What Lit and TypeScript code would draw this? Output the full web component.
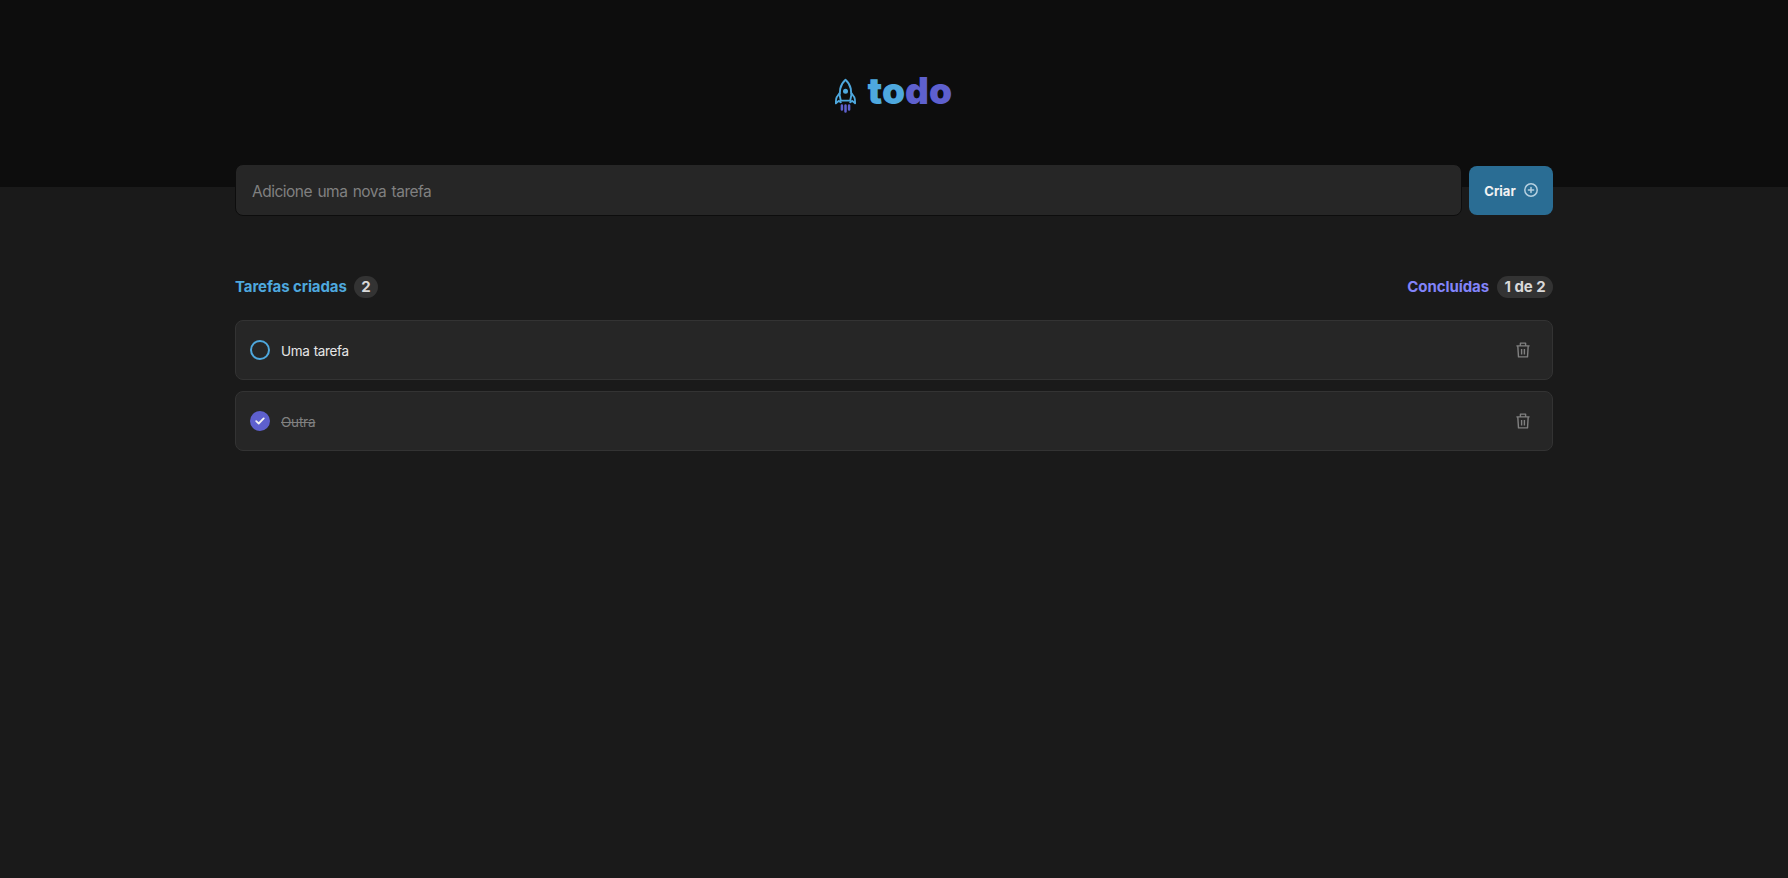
import { LitElement, html, css, svg } from "lit";
import { customElement, state } from "lit/decorators.js";

interface Task {
  title: string;
  done: boolean;
}

const rocket = svg`<svg class="rocket" width="22" height="36" viewBox="0.5 0 22 36" fill="none">
  <g stroke="#4EA8DE" stroke-width="1.9" stroke-linejoin="round" stroke-linecap="round">
    <path d="M6.3 22.6C3.7 14.5 5.8 6.2 11 1.8C16.2 6.2 18.3 14.5 15.7 22.6Z"/>
    <path d="M5 15.3L2.2 19.2C1.4 20.8 1.4 23 1.4 25.3L4.2 22.9L6.3 24.2M17 15.3L19.8 19.2C20.6 20.8 20.6 23 20.6 25.3L17.8 22.9L15.7 24.2"/>
  </g>
  <circle cx="11" cy="13.3" r="2.5" fill="#4EA8DE"/>
  <path d="M7.4 27.4V31.6M11 27.4V33.6M14.6 27.4V31.6" stroke="#5E60CE" stroke-width="2.5" stroke-linecap="round"/>
</svg>`;

const plus = svg`<svg class="plus" width="16" height="16" viewBox="0 0 16 16" fill="none" stroke="#B5D0E0" stroke-width="1.5" stroke-linecap="round">
  <circle cx="8" cy="8" r="6.2"/><path d="M8 5.4V10.6M5.4 8H10.6"/>
</svg>`;

const trash = svg`<svg width="14" height="16" viewBox="0 0 14 16" fill="none" stroke="#808080" stroke-width="1.4" stroke-linejoin="round">
  <path d="M0.4 3.9H13.6M4.4 3.7V1.1H9.6V3.7M1.8 4L2.5 14.9H11.5L12.2 4M5.6 7V12.4M8.4 7V12.4"/>
</svg>`;

const check = svg`<svg width="10" height="8" viewBox="0 0 10 8" fill="none" stroke="#F2F2F2" stroke-width="1.8" stroke-linecap="round" stroke-linejoin="round">
  <path d="M1.2 4.1L3.7 6.5L8.7 1.4"/>
</svg>`;

@customElement("app-root")
export class AppRoot extends LitElement {
  @state() private tasks: Task[] = [
    { title: "Uma tarefa", done: false },
    { title: "Outra", done: true },
  ];

  static styles = css`
    :host { display: block; min-height: 100vh; background: #1a1a1a; font-family: Inter, sans-serif; color: #f2f2f2; }
    * { box-sizing: border-box; }
    svg { display: block; flex: none; }
    .header { height: 187px; background: #0d0d0d; display: flex; justify-content: center; align-items: flex-start; padding-top: 67px; }
    .logo { display: flex; gap: 11px; width: 119px; }
    .rocket { margin-top: 11px; }
    .word { font-size: 37px; line-height: 47px; font-weight: 900; color: #4ea8de; }
    .word .end { color: #5e60ce; }
    .main { width: 1318px; margin: -23px auto 0; }
    .form { display: flex; align-items: center; gap: 7px; height: 52px; }
    .field { flex: 1; min-width: 0; height: 52px; padding: 2px 16px 0; border: 1px solid #0d0d0d; border-radius: 8px; background: #262626; color: #f2f2f2; font: 400 15.5px Inter, sans-serif; letter-spacing: -0.5px; word-spacing: 1.5px; }
    .field::placeholder { color: #808080; opacity: 1; }
    .create { width: 84px; height: 49px; margin-top: 1px; border: 0; border-radius: 8px; padding: 0 0 0 1px; background: #2a6d94; color: #f2f2f2; font: 700 13px Inter, sans-serif; display: flex; align-items: center; justify-content: center; gap: 7px; }
    .plus { margin-bottom: 1px; }
    .summary { display: flex; justify-content: space-between; margin-top: 60px; height: 22px; }
    .stat { display: flex; gap: 7px; font-size: 15px; line-height: 22px; font-weight: 700; letter-spacing: -0.08px; color: #4ea8de; }
    .stat.finished { color: #8284fa; gap: 8px; }
    .count { height: 22px; padding: 0 7.5px; border-radius: 11px; background: #333; color: #d9d9d9; }
    .list { display: flex; flex-direction: column; gap: 11px; margin-top: 22px; }
    .task { height: 60px; display: flex; align-items: center; padding: 0 22px 0 14px; border: 1px solid #333; border-radius: 8px; background: #262626; }
    .mark { width: 20px; height: 20px; border: 2px solid #4ea8de; border-radius: 50%; display: flex; align-items: center; justify-content: center; margin-right: 11px; }
    .title { flex: 1; padding-top: 2px; font-size: 13.5px; letter-spacing: -0.33px; word-spacing: 0.7px; color: #e6e6e6; }
    .done .mark { background: #5e60ce; border-color: #5e60ce; }
    .done .title { color: #808080; text-decoration: line-through; letter-spacing: -0.2px; }
  `;

  render() {
    const done = this.tasks.filter((t) => t.done).length;
    return html`
      <header class="header">
        <div class="logo">${rocket}<span class="word">to<span class="end">do</span></span></div>
      </header>
      <main class="main">
        <form class="form">
          <input class="field" placeholder="Adicione uma nova tarefa" />
          <button class="create" type="button">Criar ${plus}</button>
        </form>
        <div class="summary">
          <div class="stat">Tarefas criadas <span class="count">${this.tasks.length}</span></div>
          <div class="stat finished">Concluídas <span class="count">${done} de ${this.tasks.length}</span></div>
        </div>
        <div class="list">
          ${this.tasks.map((t) => html`
            <div class="task ${t.done ? "done" : ""}">
              <span class="mark">${t.done ? check : ""}</span>
              <span class="title">${t.title}</span>
              ${trash}
            </div>`)}
        </div>
      </main>
    `;
  }
}
